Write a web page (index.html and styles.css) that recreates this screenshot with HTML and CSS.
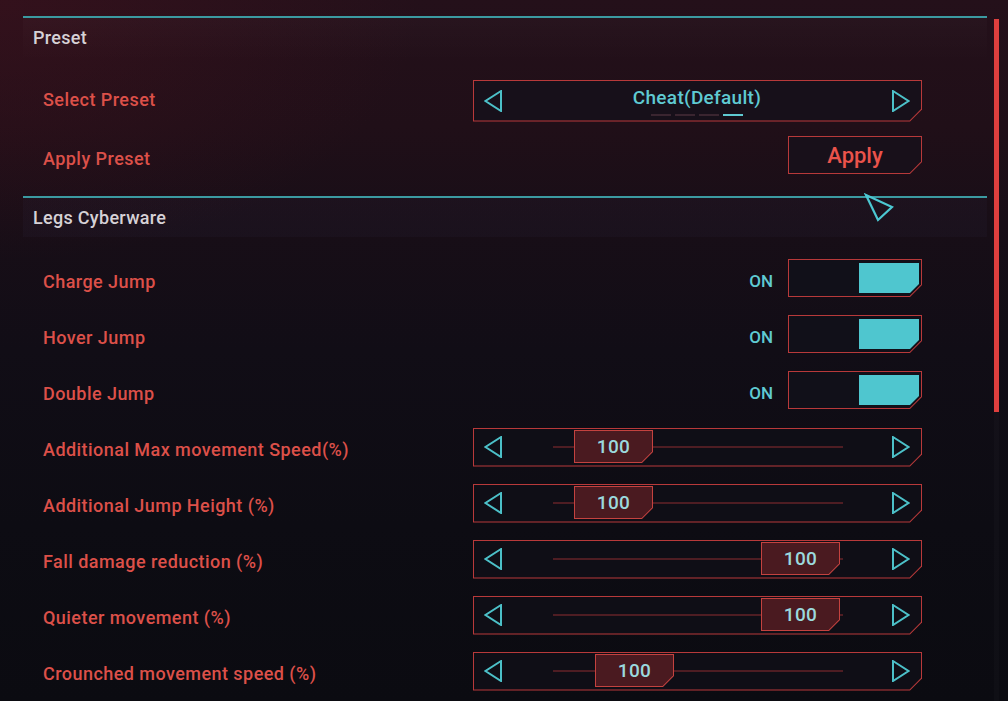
FILE: index.html
```html
<!DOCTYPE html>
<html lang="en">
<head>
<meta charset="utf-8">
<title>Legs Cyberware Settings</title>
<link rel="stylesheet" href="styles.css">
</head>
<body>
<div class="screen">
  <main class="list">
    <section class="group group-preset">
      <div class="group-head"><span class="head-text">Preset</span></div>
      <div class="row row-preset">
        <span class="label">Select Preset</span>
        <div class="selector chamfer">
          <svg class="arrow" viewBox="0 0 18 22"><polygon points="17,1 1.5,11 17,21" /></svg>
          <div class="selector-mid">
            <span class="selector-text">Cheat(Default)</span>
            <div class="dashes"><i></i><i></i><i></i><i class="on"></i></div>
          </div>
          <svg class="arrow" viewBox="0 0 18 22"><polygon points="1,1 16.5,11 1,21" /></svg>
        </div>
      </div>
      <div class="row row-preset">
        <span class="label">Apply Preset</span>
        <button class="apply chamfer"><span>Apply</span></button>
      </div>
    </section>

    <section class="group group-legs">
      <div class="group-head"><span class="head-text">Legs Cyberware</span></div>

      <div class="row">
        <span class="label">Charge Jump</span>
        <div class="toggle-wrap"><span class="state">ON</span><div class="toggle chamfer"><span class="fill"></span></div></div>
      </div>
      <div class="row">
        <span class="label">Hover Jump</span>
        <div class="toggle-wrap"><span class="state">ON</span><div class="toggle chamfer"><span class="fill"></span></div></div>
      </div>
      <div class="row">
        <span class="label">Double Jump</span>
        <div class="toggle-wrap"><span class="state">ON</span><div class="toggle chamfer"><span class="fill"></span></div></div>
      </div>

      <div class="row">
        <span class="label">Additional Max movement Speed(%)</span>
        <div class="slider chamfer">
          <svg class="arrow" viewBox="0 0 18 22"><polygon points="17,1 1.5,11 17,21" /></svg>
          <div class="track"><div class="handle chamfer" style="left:21px"><span>100</span></div></div>
          <svg class="arrow" viewBox="0 0 18 22"><polygon points="1,1 16.5,11 1,21" /></svg>
        </div>
      </div>
      <div class="row">
        <span class="label">Additional Jump Height (%)</span>
        <div class="slider chamfer">
          <svg class="arrow" viewBox="0 0 18 22"><polygon points="17,1 1.5,11 17,21" /></svg>
          <div class="track"><div class="handle chamfer" style="left:21px"><span>100</span></div></div>
          <svg class="arrow" viewBox="0 0 18 22"><polygon points="1,1 16.5,11 1,21" /></svg>
        </div>
      </div>
      <div class="row">
        <span class="label">Fall damage reduction (%)</span>
        <div class="slider chamfer">
          <svg class="arrow" viewBox="0 0 18 22"><polygon points="17,1 1.5,11 17,21" /></svg>
          <div class="track"><div class="handle chamfer" style="left:208px"><span>100</span></div></div>
          <svg class="arrow" viewBox="0 0 18 22"><polygon points="1,1 16.5,11 1,21" /></svg>
        </div>
      </div>
      <div class="row">
        <span class="label">Quieter movement (%)</span>
        <div class="slider chamfer">
          <svg class="arrow" viewBox="0 0 18 22"><polygon points="17,1 1.5,11 17,21" /></svg>
          <div class="track"><div class="handle chamfer" style="left:208px"><span>100</span></div></div>
          <svg class="arrow" viewBox="0 0 18 22"><polygon points="1,1 16.5,11 1,21" /></svg>
        </div>
      </div>
      <div class="row">
        <span class="label">Crounched movement speed (%)</span>
        <div class="slider chamfer">
          <svg class="arrow" viewBox="0 0 18 22"><polygon points="17,1 1.5,11 17,21" /></svg>
          <div class="track"><div class="handle chamfer" style="left:42px"><span>100</span></div></div>
          <svg class="arrow" viewBox="0 0 18 22"><polygon points="1,1 16.5,11 1,21" /></svg>
        </div>
      </div>
    </section>
  </main>

  <div class="scrollbar"><div class="thumb"></div></div>

  <svg class="cursor" viewBox="0 0 32 30" aria-hidden="true"><polygon points="2,2 28,14 14,27" /></svg>
</div>
</body>
</html>
```

FILE: styles.css
```css
* { box-sizing: border-box; }

html, body {
  margin: 0;
  padding: 0;
  width: 1008px;
  height: 701px;
  overflow: hidden;
}

body {
  font-family: Roboto, "Noto Sans", sans-serif;
  font-weight: 500;
  background:
    radial-gradient(ellipse 420px 260px at 0 0, rgba(70, 18, 30, 0.45), rgba(70, 18, 30, 0) 100%),
    linear-gradient(to bottom, #24101a 0%, #200f18 18%, #180e17 32%, #110d16 50%, #0d0c13 75%, #0b0b11 100%);
}

.screen {
  position: relative;
  display: flex;
  height: 701px;
  padding: 16px 0 0 23px;
}

.list {
  width: 964px;
  flex: none;
}

/* section header */
.group-head {
  border-top: 2px solid #3b9aa1;
  color: #d6d1d6;
  font-size: 18px;
  line-height: 22px;
  letter-spacing: 0.3px;
}

.group-preset .group-head {
  height: 54px;
  padding: 9px 0 0 10px;
  background: linear-gradient(to bottom, rgba(255,255,255,0.02), rgba(255,255,255,0) 44px);
}

.group-preset {
  padding-bottom: 8px;
}

.group-legs .group-head {
  height: 57px;
  padding: 9px 0 0 10px;
  background: linear-gradient(to bottom, rgba(50,45,75,0.12) 0, rgba(50,45,75,0.12) 39px, rgba(0,0,0,0) 39px);
}

/* rows */
.row {
  display: flex;
  align-items: center;
  justify-content: space-between;
  height: 56px;
  padding: 0 65px 0 20px;
}

.row-preset {
  height: 59px;
}

.label {
  color: #dc5049;
  font-size: 18px;
  font-weight: 500;
  letter-spacing: 0.45px;
}

/* chamfered frames */
.chamfer {
  --c: 12px;
  --bc: #b8393a;
  --bg: #100f17;
  position: relative;
  background: var(--bc);
  clip-path: polygon(0 0, 100% 0, 100% calc(100% - var(--c)), calc(100% - var(--c)) 100%, 0 100%);
}

.chamfer::before {
  content: "";
  position: absolute;
  inset: 1px;
  background: var(--bg);
  clip-path: polygon(0 0, 100% 0, 100% calc(100% - var(--c) + 0.6px), calc(100% - var(--c) + 0.6px) 100%, 0 100%);
}

.chamfer > * {
  position: relative;
}

/* arrows */
.arrow {
  width: 18px;
  height: 22px;
  flex: none;
}

.arrow polygon {
  fill: none;
  stroke: #4cc0c8;
  stroke-width: 2;
  stroke-linejoin: miter;
}

/* preset selector */
.selector {
  width: 449px;
  height: 42px;
  margin-top: 2px;
  display: flex;
  align-items: center;
  padding: 0 12px 0 11px;
  --bg: #17101a;
}

.selector-mid {
  flex: 1;
  display: flex;
  flex-direction: column;
  align-items: center;
  padding-top: 1px;
}

.selector-text {
  color: #5fcad2;
  font-size: 19px;
  line-height: 22px;
  letter-spacing: 0.3px;
}

.dashes {
  display: flex;
  gap: 4px;
  margin-top: 5px;
}

.dashes i {
  display: block;
  width: 20px;
  height: 2px;
  background: #3a2530;
}

.dashes i.on {
  background: #5fcad2;
}

/* apply button */
.apply {
  width: 134px;
  height: 38px;
  border: 0;
  padding: 0;
  margin-top: -7px;
  font: inherit;
  color: #ea534b;
  font-size: 22px;
  font-weight: 500;
  display: flex;
  align-items: center;
  justify-content: center;
  --bg: #18101a;
}

/* toggles */
.toggle-wrap {
  display: flex;
  align-items: center;
  gap: 15px;
}

.state {
  color: #5fcad2;
  font-size: 17px;
}

.toggle {
  width: 134px;
  height: 38px;
  margin-top: -6px;
  display: flex;
  justify-content: flex-end;
  align-items: center;
  padding: 0 3px 0 0;
  --bg: #111019;
}

.toggle .fill {
  display: block;
  width: 60px;
  height: 30px;
  background: #4fc6cf;
  clip-path: polygon(0 0, 100% 0, 100% calc(100% - 9px), calc(100% - 9px) 100%, 0 100%);
}

/* sliders */
.slider {
  width: 449px;
  height: 39px;
  margin-top: -4px;
  display: flex;
  align-items: center;
  padding: 0 12px 0 11px;
  --bg: #0f0e16;
}

.track {
  width: 290px;
  height: 2px;
  margin: 0 49px 0 51px;
  background: #4e1d23;
  flex: none;
}

.handle {
  position: absolute;
  top: -16px;
  width: 79px;
  height: 33px;
  --c: 11px;
  --bc: #c4423f;
  --bg: #4a1a20;
  display: flex;
  align-items: center;
  justify-content: center;
}

.handle span {
  color: #9bd9de;
  font-size: 19px;
  line-height: 1;
  letter-spacing: 0.3px;
}

/* scrollbar */
.scrollbar {
  width: 5px;
  margin: 3px 0 0 7px;
  height: 685px;
  background: rgba(255, 255, 255, 0.02);
  flex: none;
}

.thumb {
  width: 5px;
  height: 393px;
  background: #de3f3e;
}

/* mouse cursor overlay */
.cursor {
  position: absolute;
  left: 864px;
  top: 193px;
  width: 32px;
  height: 30px;
}

.cursor polygon {
  fill: none;
  stroke: #4cc8d2;
  stroke-width: 2.2;
  stroke-linejoin: miter;
}
```
